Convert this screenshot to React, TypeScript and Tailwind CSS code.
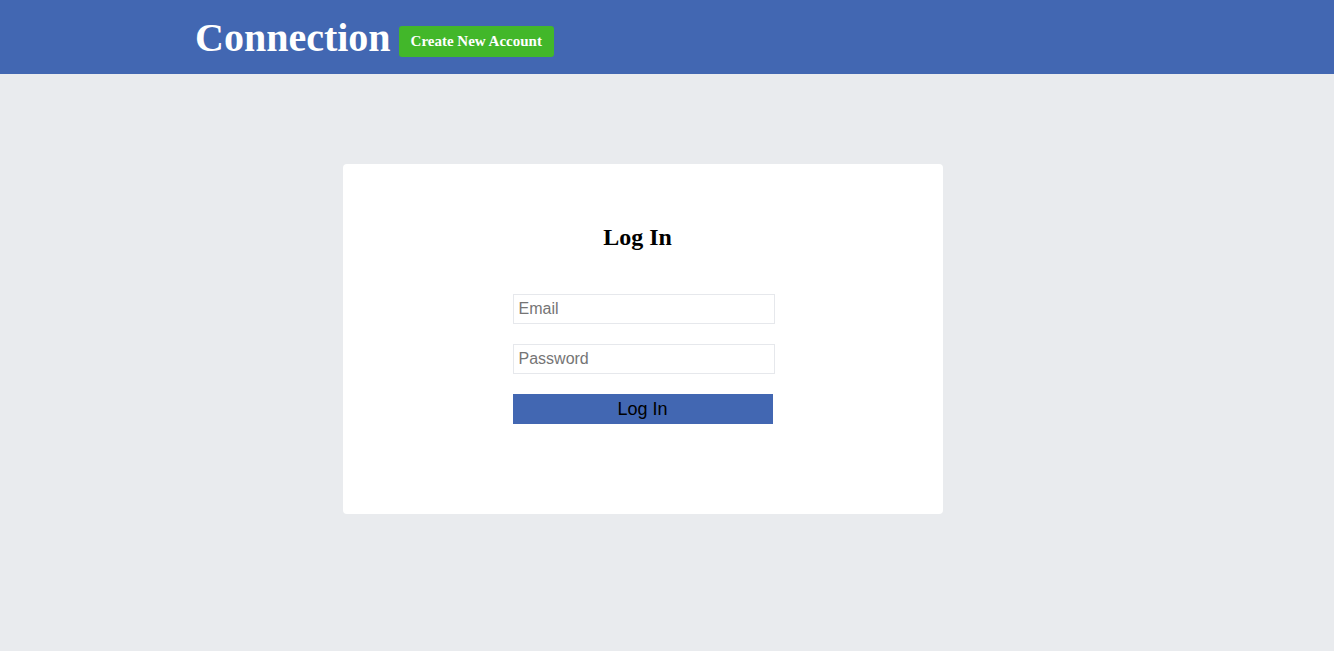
export default function App() {
    return (
        <div className="min-h-[651px] bg-[#e9ebee]">
            {/* Header */}
            <header className="flex h-[74px] items-center bg-[#4267b2] pl-[195px] font-['Liberation_Serif',serif]">
                <h1 className="mt-[2px] text-[40px] font-bold leading-[46px] text-white">Connection</h1>
                <button className="ml-[8px] mt-[9px] h-[31px] rounded-[3px] bg-[#42b72a] px-3 text-[15px] font-bold text-white">
                    Create New Account
                </button>
            </header>

            {/* Login card */}
            <div className="flex justify-center pr-[48px] pt-[90px]">
                <div className="flex h-[350px] w-[600px] flex-col items-center rounded-[4px] bg-white pt-[59px]">
                    <h2 className="w-full pr-[11px] text-center font-['Liberation_Serif',serif] text-[24px] font-bold leading-[28px] text-black">
                        Log In
                    </h2>
                    <form className="ml-[1px] mt-[43px] flex w-[262px] flex-col font-['Liberation_Sans',Arial,sans-serif]">
                        <input
                            type="email"
                            placeholder="Email"
                            className="h-[30px] w-[262px] border border-[#e6e8ec] px-[5px] text-[16px] placeholder:text-[#757575] focus:outline-none"
                        />
                        <input
                            type="password"
                            placeholder="Password"
                            className="mt-5 h-[30px] w-[262px] border border-[#e6e8ec] px-[5px] text-[16px] placeholder:text-[#757575] focus:outline-none"
                        />
                        <button
                            type="button"
                            className="mt-5 h-[30px] w-[260px] bg-[#4267b2] text-[18px] text-black"
                        >
                            Log In
                        </button>
                    </form>
                </div>
            </div>
        </div>
    );
}
